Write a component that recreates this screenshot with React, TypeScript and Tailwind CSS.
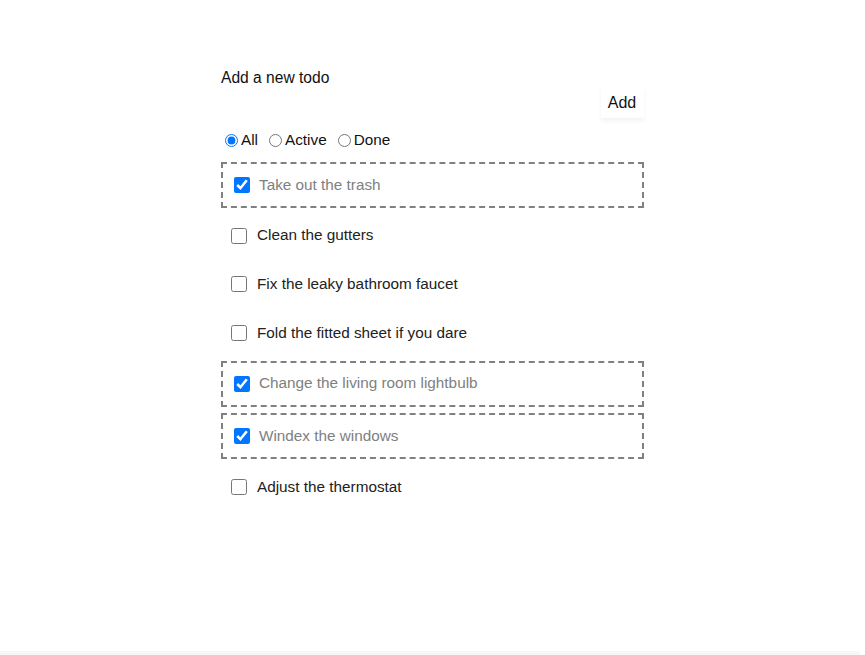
import { useState } from 'react';

type Todo = { id: number; text: string; done: boolean };

const initialTodos: Todo[] = [
  { id: 1, text: 'Take out the trash', done: true },
  { id: 2, text: 'Clean the gutters', done: false },
  { id: 3, text: 'Fix the leaky bathroom faucet', done: false },
  { id: 4, text: 'Fold the fitted sheet if you dare', done: false },
  { id: 5, text: 'Change the living room lightbulb', done: true },
  { id: 6, text: 'Windex the windows', done: true },
  { id: 7, text: 'Adjust the thermostat', done: false },
];

type Filter = 'all' | 'active' | 'done';

export default function App() {
  const [todos, setTodos] = useState(initialTodos);
  const [filter, setFilter] = useState<Filter>('all');

  const visible = todos.filter((t) =>
    filter === 'all' ? true : filter === 'done' ? t.done : !t.done
  );

  const toggle = (id: number) =>
    setTodos(todos.map((t) => (t.id === id ? { ...t, done: !t.done } : t)));

  return (
    <div
      className="flex flex-col bg-white text-[#111]"
      style={{ fontFamily: '"Liberation Sans", Arial, sans-serif' }}
    >
      <div className="h-[651px]">
        <div className="mx-auto w-[423px] pt-[68px]">
          <div className="h-[20px] text-[15.6px] leading-[20px]">Add a new todo</div>

          <div className="flex justify-end">
            <button className="h-[30px] w-[43px] bg-white pr-[1px] text-[16px] shadow-[0_3px_4px_rgba(0,0,0,0.05)]">
              Add
            </button>
          </div>

          <div className="mt-[13px] flex h-[18px] items-center pl-[4px] text-[15.3px]">
            {(['all', 'active', 'done'] as Filter[]).map((f) => (
              <label key={f} className="mr-[11px] flex items-center">
                <input
                  type="radio"
                  name="filter"
                  checked={filter === f}
                  onChange={() => setFilter(f)}
                  className="mr-[3px] h-[13px] w-[13px]"
                />
                {f === 'all' ? 'All' : f === 'active' ? 'Active' : 'Done'}
              </label>
            ))}
          </div>

          <ul className="mt-[13px] flex flex-col gap-[6.7px]">
            {visible.map((t) =>
              t.done ? (
                <li
                  key={t.id}
                  className="flex h-[46px] items-center border-2 border-dashed border-[#808080] pl-[11px] text-[15.3px] text-[#808080]"
                >
                  <input
                    type="checkbox"
                    checked
                    onChange={() => toggle(t.id)}
                    className="mr-[9px] h-4 w-4"
                  />
                  {t.text}
                </li>
              ) : (
                <li key={t.id} className="flex h-[42px] items-center pl-[10px] text-[15.3px] text-[#222]">
                  <input
                    type="checkbox"
                    checked={false}
                    onChange={() => toggle(t.id)}
                    className="mr-[10px] h-4 w-4"
                  />
                  {t.text}
                </li>
              )
            )}
          </ul>
        </div>
      </div>
      <div className="h-[4px] w-[860px] bg-[#f7f7f7]" />
    </div>
  );
}
